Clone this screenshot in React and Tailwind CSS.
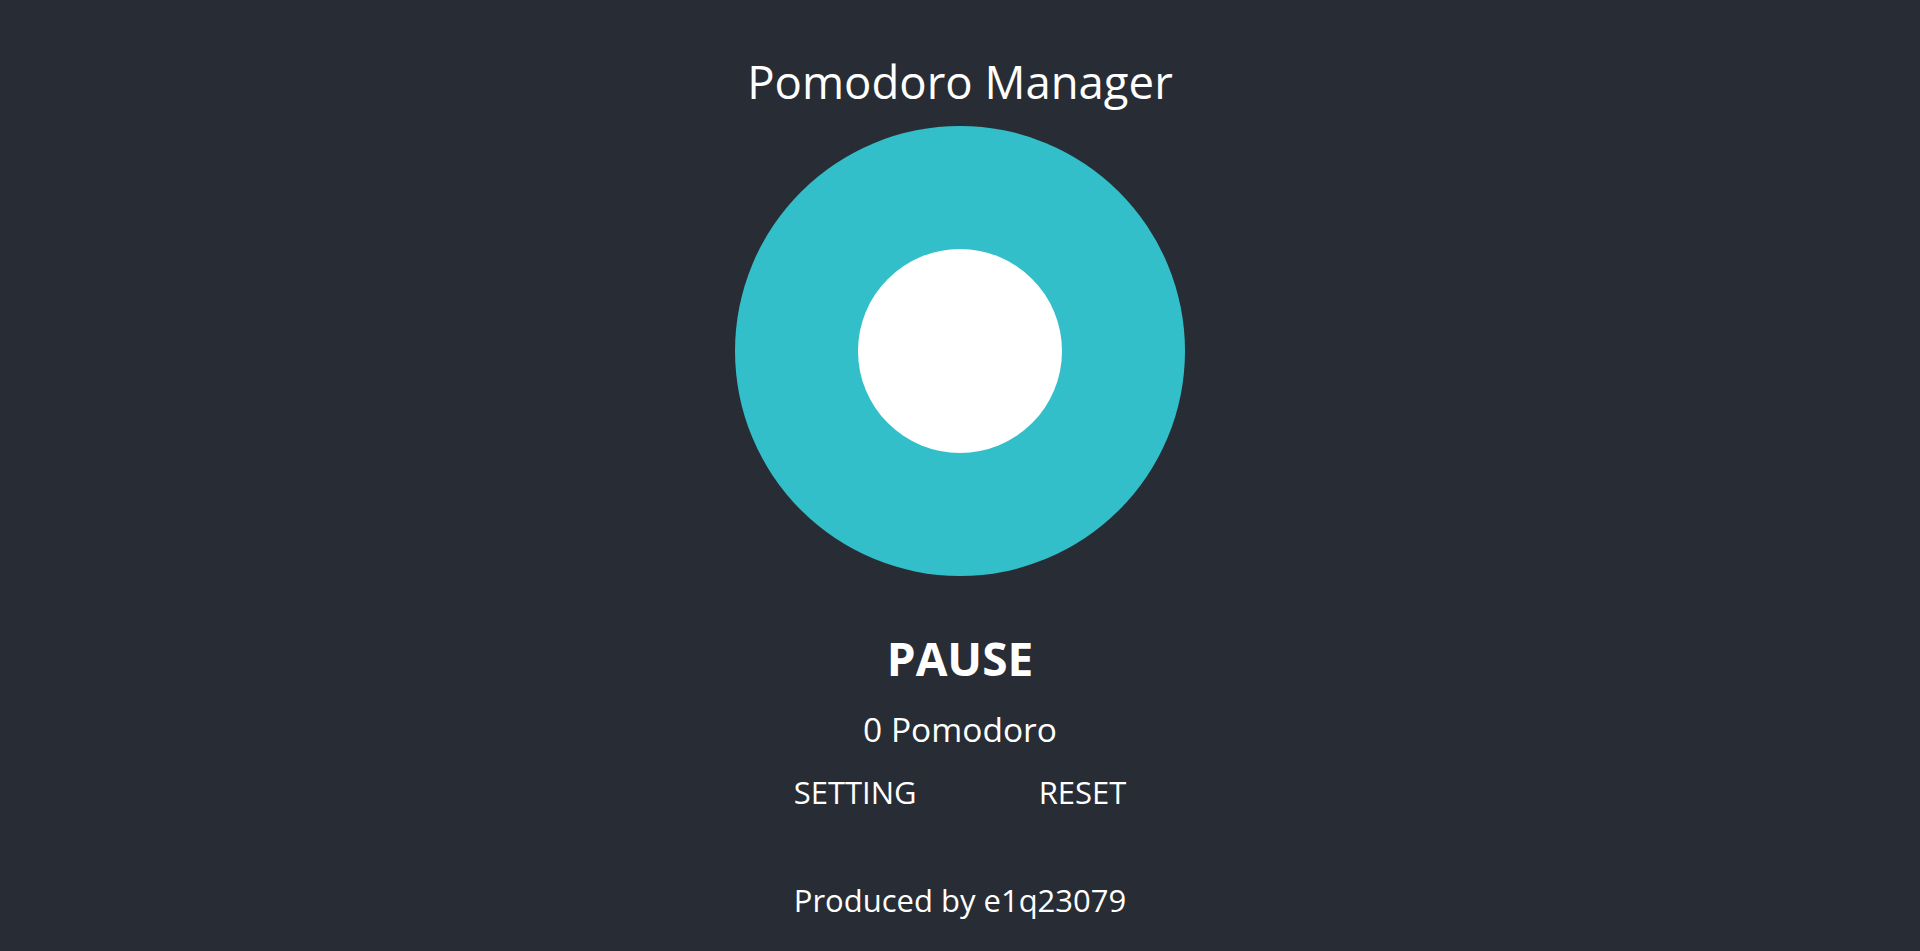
import React from "react";

const App = () => {
  return (
    <div
      className="min-h-screen w-full bg-[#282c34] text-white flex flex-col items-center"
      style={{ fontFamily: '"Open Sans", "Noto Sans", sans-serif' }}
    >
      <h1 className="mt-[59px] text-[45.5px] leading-none font-normal">Pomodoro Manager</h1>

      {/* Timer ring */}
      <div className="mt-[21px] w-[450px] h-[450px] rounded-full bg-[#32bfc9] flex items-center justify-center">
        <div className="w-[204px] h-[204px] rounded-full bg-white" />
      </div>

      <div className="mt-[59px] text-[46px] leading-none font-bold">PAUSE</div>
      <div className="mt-[32px] text-[33.5px] leading-none">0 Pomodoro</div>

      <div className="mt-[31px] flex items-center gap-[122px] text-[31px] leading-none">
        <button className="cursor-pointer">SETTING</button>
        <button className="cursor-pointer">RESET</button>
      </div>

      <div className="mt-[77px] text-[31px] leading-none">Produced by e1q23079</div>
    </div>
  );
};

export default App;
